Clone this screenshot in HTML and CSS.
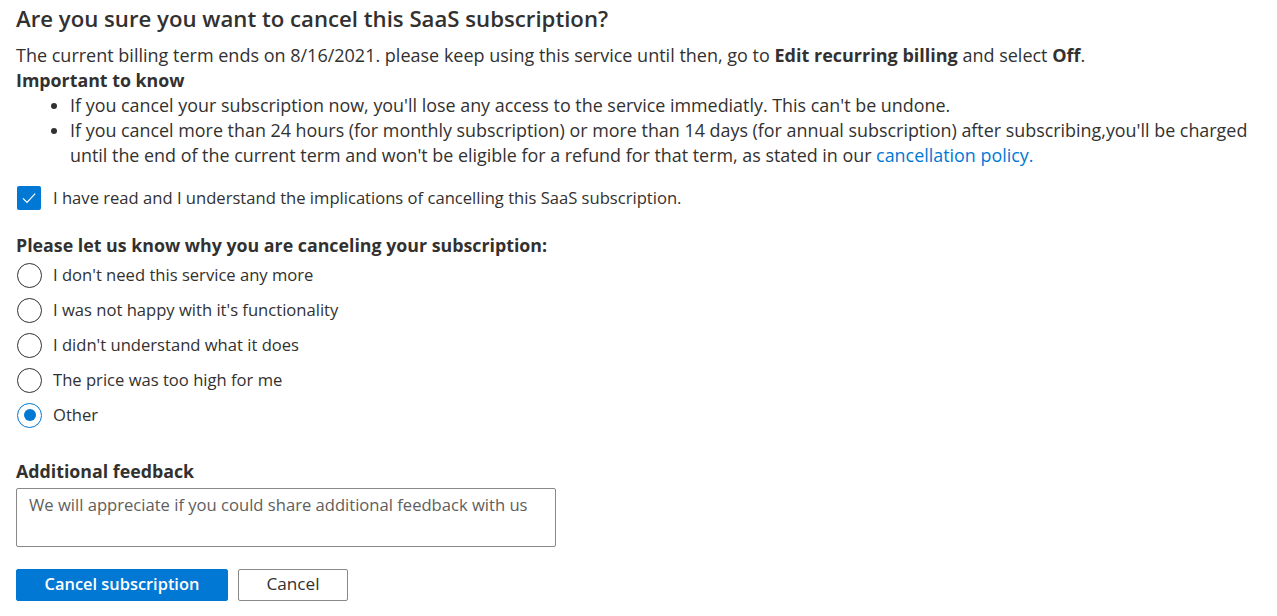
FILE: index.html
```html
<!DOCTYPE html>
<html lang="en">
<head>
<meta charset="utf-8">
<title>Cancel subscription</title>
<link rel="stylesheet" href="styles.css">
</head>
<body>
<main class="page">
  <h1 class="title">Are you sure you want to cancel this SaaS subscription?</h1>
  <p class="text">The current billing term ends on 8/16/2021. please keep using this service until then, go to <strong>Edit recurring billing</strong> and select <strong>Off</strong>.</p>
  <p class="text strong">Important to know</p>
  <ul class="bullets">
    <li>If you cancel your subscription now, you'll lose any access to the service immediatly. This can't be undone.</li>
    <li>If you cancel more than 24 hours (for monthly subscription) or more than 14 days (for annual subscription) after subscribing,you'll be charged until the end of the current term and won't be eligible for a refund for that term, as stated in our <a class="link" href="#">cancellation policy.</a></li>
  </ul>

  <label class="check-row">
    <span class="checkbox">
      <svg width="18" height="18" viewBox="0 0 18 18"><path d="M3 9.4 L7 13.4 L15.2 4.6" fill="none" stroke="#fff" stroke-width="1.3"/></svg>
    </span>
    <span class="label">I have read and I understand the implications of cancelling this SaaS subscription.</span>
  </label>

  <p class="text strong reason-title">Please let us know why you are canceling your subscription:</p>
  <div class="radios">
    <div class="radio-row"><span class="radio"></span><span class="label">I don't need this service any more</span></div>
    <div class="radio-row"><span class="radio"></span><span class="label">I was not happy with it's functionality</span></div>
    <div class="radio-row"><span class="radio"></span><span class="label">I didn't understand what it does</span></div>
    <div class="radio-row"><span class="radio"></span><span class="label">The price was too high for me</span></div>
    <div class="radio-row"><span class="radio checked"></span><span class="label">Other</span></div>
  </div>

  <p class="text strong feedback-title">Additional feedback</p>
  <div class="textarea"><span class="placeholder">We will appreciate if you could share additional feedback with us</span></div>

  <div class="actions">
    <button class="btn primary">Cancel subscription</button>
    <button class="btn secondary">Cancel</button>
  </div>
</main>
</body>
</html>
```

FILE: styles.css
```css
* { box-sizing: border-box; }
html, body { margin: 0; padding: 0; background: #fff; }
body {
  font-family: "Open Sans", "Noto Sans", "Liberation Sans", sans-serif;
  color: #323130;
  font-size: 18px;
  line-height: 25px;
}
.page { padding: 0 16px; }
.title {
  margin: 0;
  height: 42.5px;
  font-size: 22.2px;
  font-weight: 600;
  line-height: 38px;
}
.text { margin: 0; }
.strong { font-weight: 700; font-size: 17.8px; }
strong { font-weight: 700; }
.bullets { margin: 0; padding-left: 54px; font-size: 17.9px; }
.bullets li { margin: 0; }
.link { color: #0078d4; text-decoration: none; }
.label { font-size: 16.6px; margin-top: -2px; }

.check-row {
  display: flex;
  align-items: center;
  gap: 12px;
  margin-top: 18px;
  height: 25px;
  padding-left: 1px;
}
.checkbox {
  width: 24px;
  height: 24px;
  background: #0078d4;
  border-radius: 2px;
  display: flex;
  align-items: center;
  justify-content: center;
}
.reason-title { margin-top: 22px; }
.radios {
  display: flex;
  flex-direction: column;
  gap: 10px;
  padding-top: 5px;
}
.radio-row {
  display: flex;
  align-items: center;
  gap: 11px;
  height: 25px;
  padding-left: 1px;
}
.radio {
  width: 25px;
  height: 25px;
  border: 1px solid #323130;
  border-radius: 50%;
  display: flex;
  align-items: center;
  justify-content: center;
}
.radio.checked { border-color: #0078d4; }
.radio.checked::after {
  content: "";
  width: 12px;
  height: 12px;
  border-radius: 50%;
  background: #0078d4;
}
.feedback-title { margin-top: 31px; }
.textarea {
  margin-top: 4.5px;
  width: 540px;
  height: 59px;
  border: 1px solid #8a8886;
  border-radius: 2px;
  padding: 3px 12px;
}
.placeholder { color: #605e5c; font-size: 16.6px; }
.actions {
  display: flex;
  gap: 10px;
  margin-top: 22px;
}
.btn {
  font-family: inherit;
  height: 32px;
  border-radius: 2px;
  padding: 0 0 2px;
  line-height: 28px;
  cursor: pointer;
}
.primary {
  width: 212px;
  background: #0078d4;
  border: 1px solid #0078d4;
  color: #fff;
  font-size: 16.4px;
  font-weight: 600;
}
.secondary {
  width: 110px;
  background: #fff;
  border: 1px solid #8a8886;
  color: #323130;
  font-size: 17.2px;
  font-weight: 400;
}
```
